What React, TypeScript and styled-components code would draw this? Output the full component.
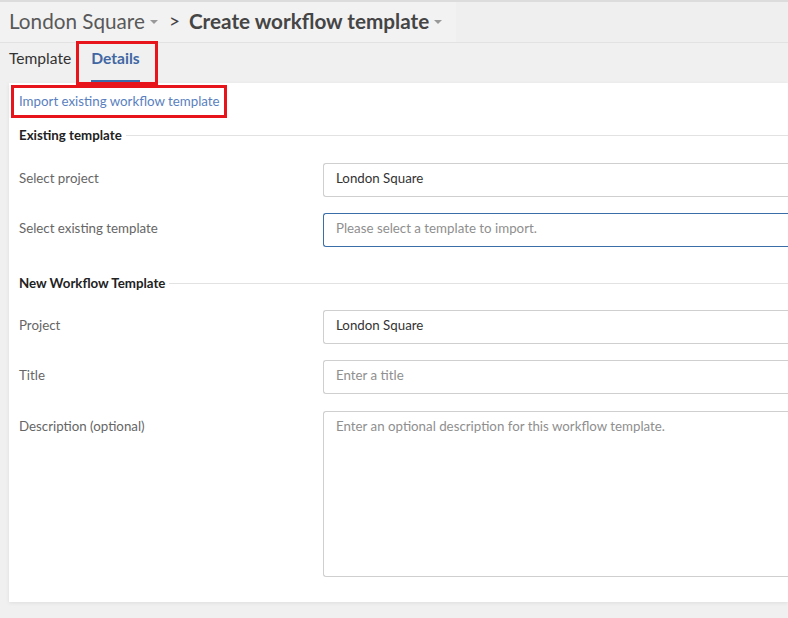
import styled, { createGlobalStyle } from 'styled-components';

const GlobalStyle = createGlobalStyle`
	html, body {
		margin: 0;
		padding: 0;
		background: #f0f0f0;
		font-family: 'Lato', 'Open Sans', sans-serif;
		overflow: hidden;
	}
`;

const Page = styled.div`
	width: 788px;
	height: 618px;
	border-top: 2px solid #dcdcdc;
	box-sizing: border-box;
	background: #f0f0f0;
`;

const Header = styled.div`
	display: flex;
	height: 40px;
	border-bottom: 1px solid #e2e2e2;
	background: #efefef;
`;

const Crumbs = styled.div`
	display: flex;
	align-items: center;
	gap: 5px;
	padding: 0 12px 3px 9px;
	background: #f2f2f2;
	font-size: 20.7px;
`;

const Crumb = styled.span<{ $bold?: boolean }>`
	color: ${({ $bold }) => ($bold ? '#454545' : '#595959')};
	font-weight: ${({ $bold }) => ($bold ? 700 : 400)};
`;

const Caret = styled.span`
	display: inline-block;
	width: 0;
	height: 0;
	margin: 3px 2px 0 0;
	border-left: 4px solid transparent;
	border-right: 4px solid transparent;
	border-top: 4px solid #999;
`;

const Separator = styled.span`
	margin: 0 4px 0 4px;
	color: #444;
	font-size: 19px;
`;

const Tabs = styled.div`
	display: flex;
	align-items: stretch;
	height: 40px;
	padding-left: 9px;
`;

const Tab = styled.div<{ $active?: boolean }>`
	position: relative;
	display: flex;
	align-items: center;
	margin-right: 20px;
	padding-bottom: 8px;
	font-size: 15.6px;
	font-weight: ${({ $active }) => ($active ? 700 : 400)};
	color: ${({ $active }) => ($active ? '#4067a3' : '#333')};
	border-bottom: 3px solid ${({ $active }) => ($active ? '#3d6aa8' : 'transparent')};
`;

const Highlight = styled.div`
	position: absolute;
	left: -15px;
	right: -18px;
	top: -2px;
	bottom: -5px;
	border: 3px solid #e8141c;
`;

const Card = styled.div`
	margin-left: 9px;
	height: 519px;
	padding-left: 10px;
	background: #fff;
	box-shadow: 0 1px 4px rgba(0, 0, 0, 0.08);
`;

const ImportLink = styled.a`
	position: relative;
	display: inline-block;
	margin-top: 10px;
	color: #5a7fc0;
	font-size: 13.3px;
	text-decoration: none;
`;

const LinkHighlight = styled.span`
	position: absolute;
	left: -8px;
	right: -7px;
	top: -8px;
	bottom: -9px;
	border: 3px solid #e8141c;
`;

const SectionTitle = styled.div<{ $gap: number }>`
	display: flex;
	align-items: center;
	gap: 4px;
	margin-top: ${({ $gap }) => $gap}px;
	color: #222;
	font-size: 13.3px;
	font-weight: 700;

	&::after {
		content: '';
		flex: 1;
		height: 1px;
		background: #e2e2e2;
	}
`;

const Row = styled.div<{ $gap: number }>`
	display: grid;
	grid-template-columns: 304px 1fr;
	align-items: start;
	margin-top: ${({ $gap }) => $gap}px;
`;

const Label = styled.label`
	padding-top: 7px;
	color: #666;
	font-size: 13.3px;
`;

const Field = styled.div<{ $focused?: boolean; $placeholder?: boolean }>`
	box-sizing: border-box;
	height: 34px;
	padding: 6px 12px;
	border: 1px solid ${({ $focused }) => ($focused ? '#3a6ea8' : '#cfcfcf')};
	border-right: none;
	border-radius: 3px 0 0 3px;
	color: ${({ $placeholder }) => ($placeholder ? '#8f8f8f' : '#333')};
	font-size: 13.3px;
`;

const TextArea = styled(Field)`
	height: 166px;
`;

function App() {
	return (
		<Page>
			<GlobalStyle />
			<Header>
				<Crumbs>
					<Crumb>London Square</Crumb>
					<Caret />
					<Separator>&gt;</Separator>
					<Crumb $bold>Create workflow template</Crumb>
					<Caret />
				</Crumbs>
			</Header>
			<Tabs>
				<Tab>Template</Tab>
				<Tab $active>
					Details
					<Highlight />
				</Tab>
			</Tabs>
			<Card>
				<ImportLink href="#">
					Import existing workflow template
					<LinkHighlight />
				</ImportLink>

				<SectionTitle $gap={18}>Existing template</SectionTitle>
				<Row $gap={20}>
					<Label>Select project</Label>
					<Field>London Square</Field>
				</Row>
				<Row $gap={16}>
					<Label>Select existing template</Label>
					<Field $focused $placeholder>
						Please select a template to import.
					</Field>
				</Row>

				<SectionTitle $gap={28}>New Workflow Template</SectionTitle>
				<Row $gap={19}>
					<Label>Project</Label>
					<Field>London Square</Field>
				</Row>
				<Row $gap={16}>
					<Label>Title</Label>
					<Field $placeholder>Enter a title</Field>
				</Row>
				<Row $gap={17}>
					<Label>Description (optional)</Label>
					<TextArea $placeholder>Enter an optional description for this workflow template.</TextArea>
				</Row>
			</Card>
		</Page>
	);
}

export default App;
